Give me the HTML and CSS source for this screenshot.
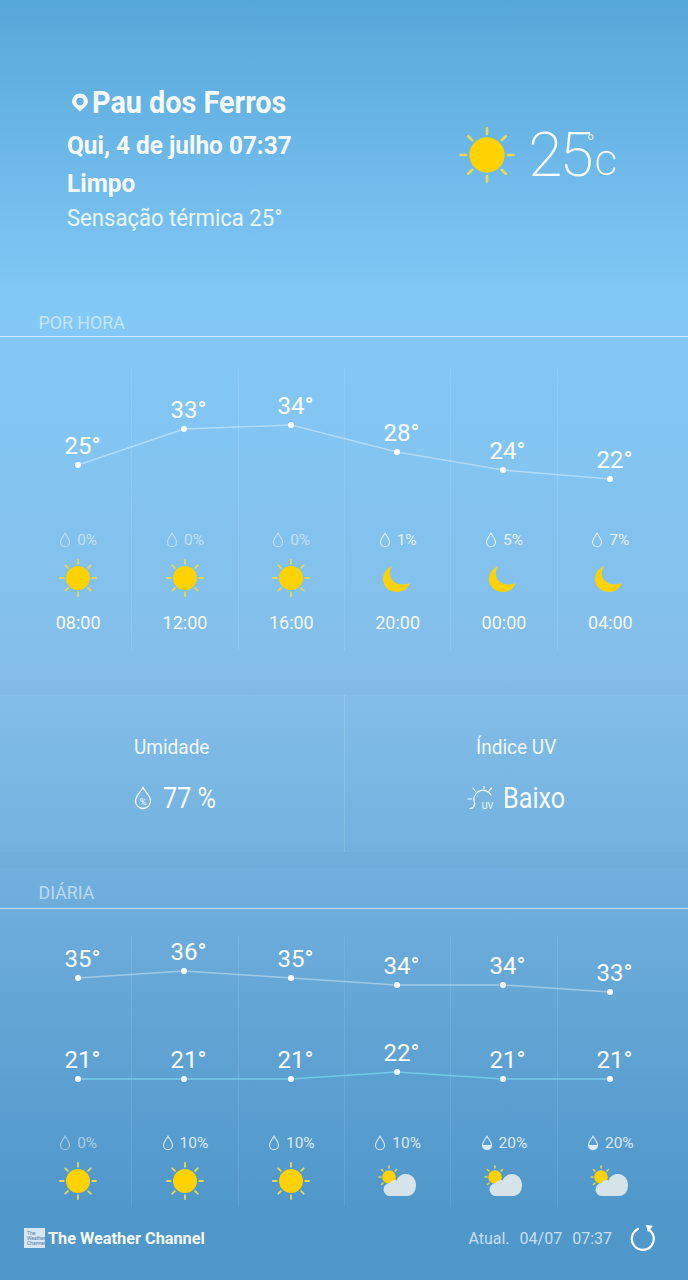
FILE: index.html
```html
<!DOCTYPE html>
<html lang="pt">
<head>
<meta charset="utf-8">
<title>Pau dos Ferros</title>
<link rel="stylesheet" href="styles.css">
</head>
<body>
<svg class="defs" width="0" height="0" aria-hidden="true">
  <symbol id="sun" viewBox="0 0 40 40">
    <g stroke="#e6d95a" stroke-width="1.900" stroke-linecap="round">
      <path d="M20 1v4M20 35v4M1 20h4M35 20h4M6.600 6.600l2.800 2.800M30.600 30.600l2.800 2.800M6.600 33.400l2.800-2.800M30.600 9.400l2.800-2.800"/>
    </g>
    <circle cx="20" cy="20" r="12.600" fill="#ffd200"/>
  </symbol>
  <symbol id="moon" viewBox="-2.500 -5 38 38">
    <path d="M10.500 2C4.500 5 1.500 10 1.500 15C1.500 23 8.500 28 15.500 28C21.500 28 26.500 24 28.500 19C22.500 21.500 14.500 21 10.500 16C7.500 12 7.500 7 10.500 2Z" fill="#ffd200"/>
  </symbol>
  <symbol id="cloudsun" viewBox="0 0 40 32">
    <g stroke="#e3d65a" stroke-width="1.500" stroke-linecap="round">
      <path d="M11 1v2M1 12h2M3.500 4.500l1.500 1.500M3.500 19.500L5 18M18.500 4.500L17 6M11 20v1"/>
    </g>
    <circle cx="11" cy="12" r="6.800" fill="#ffd200"/>
    <path d="M12.500 31A6.500 6.500 0 0 1 11.500 18C13 15.500 16 14.500 18.500 15.500C20 11.500 23.500 9 28 9C34 9 38 14 38 20C38 27 34 31 29 31Z" fill="#d6e3e9"/>
  </symbol>
  <symbol id="drop" viewBox="0 0 12 16">
    <path d="M6 1.200C4.500 4 1.500 7 1.500 10.200A4.500 4.500 0 0 0 10.500 10.200C10.500 7 7.500 4 6 1.200Z" fill="none" stroke="currentColor" stroke-width="1.100"/>
  </symbol>
  <symbol id="dropfill" viewBox="0 0 12 16">
    <path d="M6 1.200C4.500 4 1.500 7 1.500 10.200A4.500 4.500 0 0 0 10.500 10.200C10.500 7 7.500 4 6 1.200Z" fill="none" stroke="currentColor" stroke-width="1.100"/>
    <path d="M1.500 10h9A4.500 4.500 0 0 1 1.500 10Z" fill="currentColor"/>
  </symbol>
</svg>

<main class="screen">
  <header class="now">
    <div class="now-text">
      <h1 class="city">
        <svg class="pin" viewBox="0 0 18 19"><path fill-rule="evenodd" d="M9 0.500a8 8 0 0 0-8 8c0 4 4.500 6.500 8 10c3.500-3.500 8-6 8-10a8 8 0 0 0-8-8Zm0 4.300a3.700 3.700 0 1 1 0 7.400a3.700 3.700 0 0 1 0-7.400Z" fill="#fff"/></svg>
        <span class="city-name">Pau dos Ferros</span>
      </h1>
      <p class="date">Qui, 4 de julho 07:37</p>
      <p class="cond">Limpo</p>
      <p class="feel">Sensação térmica 25°</p>
    </div>
    <div class="now-temp">
      <svg class="sun-big"><use href="#sun"/></svg>
      <span class="big-num">25</span>
      <span class="big-unit"><span class="big-deg">°</span><span class="big-c">c</span></span>
    </div>
  </header>

  <h2 class="label">POR HORA</h2>
  <section class="hourly">
    <div class="cols cols-hour">
      <svg class="chart" viewBox="0 0 638 282">
        <polyline class="line" points="53,97 159,61 266,57 372,84 478,102 585,111"/>
        <g class="dots"><circle cx="53" cy="97" r="3"/><circle cx="159" cy="61" r="3"/><circle cx="266" cy="57" r="3"/><circle cx="372" cy="84" r="3"/><circle cx="478" cy="102" r="3"/><circle cx="585" cy="111" r="3"/></g>
        <g class="temps"><text x="57.500" y="86">25°</text><text x="163.500" y="50">33°</text><text x="270.500" y="46">34°</text><text x="376.500" y="73">28°</text><text x="482.500" y="91">24°</text><text x="589.500" y="100">22°</text></g>
      </svg>
      <div class="col"><div class="pop dim"><svg class="drop"><use href="#drop"/></svg>0%</div><svg class="ico"><use href="#sun"/></svg><div class="time">08:00</div></div>
      <div class="col"><div class="pop dim"><svg class="drop"><use href="#drop"/></svg>0%</div><svg class="ico"><use href="#sun"/></svg><div class="time">12:00</div></div>
      <div class="col"><div class="pop dim"><svg class="drop"><use href="#drop"/></svg>0%</div><svg class="ico"><use href="#sun"/></svg><div class="time">16:00</div></div>
      <div class="col"><div class="pop"><svg class="drop"><use href="#drop"/></svg>1%</div><svg class="ico"><use href="#moon"/></svg><div class="time">20:00</div></div>
      <div class="col"><div class="pop"><svg class="drop"><use href="#drop"/></svg>5%</div><svg class="ico"><use href="#moon"/></svg><div class="time">00:00</div></div>
      <div class="col"><div class="pop"><svg class="drop"><use href="#drop"/></svg>7%</div><svg class="ico"><use href="#moon"/></svg><div class="time">04:00</div></div>
    </div>
  </section>

  <section class="details">
    <div class="detail">
      <div class="detail-title">Umidade</div>
      <div class="detail-value value-hum">
        <svg class="hum" viewBox="0 0 18 24"><path d="M9 1.500C7.500 5 1.500 9.500 1.500 15A7.500 7.500 0 0 0 16.500 15C16.500 9.500 10.500 5 9 1.500Z" fill="none" stroke="#fff" stroke-width="1.300"/><text x="9" y="18.500" class="hum-p">%</text></svg>
        <span class="value-text">77 %</span>
      </div>
    </div>
    <div class="detail">
      <div class="detail-title">Índice UV</div>
      <div class="detail-value value-uv">
        <svg class="uv" viewBox="0 0 28 24"><path d="M8 18A9 9 0 1 1 24 9M17 0.500v2.500M6 2l2.500 3.500M24.500 2L22 5M1 13h3.500M3 22.500C6 22.500 7.500 20 7.500 17" fill="none" stroke="#fff" stroke-width="1.200" stroke-linecap="round"/><text x="20.500" y="23" class="uv-t">UV</text></svg>
        <span class="value-text">Baixo</span>
      </div>
    </div>
  </section>

  <h2 class="label label-daily">DIÁRIA</h2>
  <section class="daily">
    <div class="cols cols-day">
      <svg class="chart" viewBox="0 0 638 271">
        <polyline class="line" points="53,42 159,35 266,42 372,49 478,49 585,56"/>
        <polyline class="line-low" points="53,143 159,143 266,143 372,136 478,143 585,143"/>
        <g class="dots"><circle cx="53" cy="42" r="3"/><circle cx="159" cy="35" r="3"/><circle cx="266" cy="42" r="3"/><circle cx="372" cy="49" r="3"/><circle cx="478" cy="49" r="3"/><circle cx="585" cy="56" r="3"/><circle cx="53" cy="143" r="3"/><circle cx="159" cy="143" r="3"/><circle cx="266" cy="143" r="3"/><circle cx="372" cy="136" r="3"/><circle cx="478" cy="143" r="3"/><circle cx="585" cy="143" r="3"/></g>
        <g class="temps"><text x="57.500" y="31">35°</text><text x="163.500" y="24">36°</text><text x="270.500" y="31">35°</text><text x="376.500" y="38">34°</text><text x="482.500" y="38">34°</text><text x="589.500" y="45">33°</text><text x="57.500" y="132">21°</text><text x="163.500" y="132">21°</text><text x="270.500" y="132">21°</text><text x="376.500" y="125">22°</text><text x="482.500" y="132">21°</text><text x="589.500" y="132">21°</text></g>
      </svg>
      <div class="col"><div class="pop dim"><svg class="drop"><use href="#drop"/></svg>0%</div><svg class="ico"><use href="#sun"/></svg></div>
      <div class="col"><div class="pop"><svg class="drop"><use href="#drop"/></svg>10%</div><svg class="ico"><use href="#sun"/></svg></div>
      <div class="col"><div class="pop"><svg class="drop"><use href="#drop"/></svg>10%</div><svg class="ico"><use href="#sun"/></svg></div>
      <div class="col"><div class="pop"><svg class="drop"><use href="#drop"/></svg>10%</div><svg class="ico-cloud"><use href="#cloudsun"/></svg></div>
      <div class="col"><div class="pop"><svg class="drop"><use href="#dropfill"/></svg>20%</div><svg class="ico-cloud"><use href="#cloudsun"/></svg></div>
      <div class="col"><div class="pop"><svg class="drop"><use href="#dropfill"/></svg>20%</div><svg class="ico-cloud"><use href="#cloudsun"/></svg></div>
    </div>
  </section>

  <footer class="foot">
    <div class="brand">
      <div class="logo"><span>The</span><span>Weather</span><span>Channel</span></div>
      <span class="brand-name">The Weather Channel</span>
    </div>
    <div class="updated">
      <span class="upd-label">Atual.</span>
      <span>04/07</span>
      <span>07:37</span>
      <svg class="refresh" viewBox="0 -2 26 28"><path d="M8 3A11 11 0 1 0 18 3.200" fill="none" stroke="#fff" stroke-width="2.200" stroke-linecap="round"/><path d="M16 -1L23 -0.300L18 6.300Z" fill="#fff"/></svg>
    </div>
  </footer>
</main>
</body>
</html>
```

FILE: styles.css
```css
* { box-sizing: border-box; margin: 0; padding: 0; }
html, body { width: 688px; height: 1280px; overflow: hidden; }
body { font-family: Roboto, "Liberation Sans", sans-serif; color: #fff; }
.defs { position: absolute; }

.screen {
  width: 688px;
  height: 1280px;
  display: flex;
  flex-direction: column;
  background: linear-gradient(180deg, #56a7da 0, #83c9f7 310px, #84bee9 680px, #5097ca 1207px, #5097ca 1280px);
}
.screen > * { flex: none; }

/* Current conditions */
.now {
  height: 314px;
  padding: 84px 71px 0 67px;
  display: flex;
  justify-content: space-between;
  align-items: flex-start;
}
.city {
  display: flex;
  align-items: center;
  gap: 3px;
  height: 36px;
  padding-left: 4px;
  font-size: 32px;
  font-weight: 700;
  opacity: .95;
}
.city-name { display: inline-block; transform: scaleX(.9); transform-origin: left center; }
.pin { width: 18px; height: 19px; }
.date, .cond, .feel { transform-origin: left center; white-space: nowrap; }
.date { margin-top: 6px; font-size: 26.5px; font-weight: 700; line-height: 38px; opacity: .95; transform: scaleX(.92); }
.cond { font-size: 26.5px; font-weight: 700; line-height: 38px; opacity: .95; transform: scaleX(.92); }
.feel { font-size: 23.5px; font-weight: 400; line-height: 32px; opacity: .85; transform: scaleX(.94); }

.now-temp {
  display: flex;
  align-items: flex-start;
  margin-top: 42px;
}
.sun-big { width: 56px; height: 56px; margin: 1px 13px 0 0; }
.big-num { font-size: 62px; font-weight: 200; line-height: 58px; letter-spacing: -3px; }
.big-unit { display: flex; align-items: flex-start; margin-left: -4px; }
.big-deg { width: 8px; font-size: 22px; font-weight: 200; line-height: 14px; margin-top: 11px; }
.big-c { font-size: 44px; font-weight: 200; line-height: 40px; margin-top: 14px; }

/* Section labels */
.label {
  height: 23px;
  padding: 0 0 0 38.5px;
  font-size: 17.8px;
  font-weight: 400;
  line-height: 17px;
  color: rgba(255, 255, 255, .55);
  border-bottom: 1px solid rgba(255, 255, 255, .6);
}
.label-daily { margin-top: 16px; height: 25px; }

/* Columns with chart */
.hourly { height: 343px; padding: 31px 25px 0; }
.daily { padding: 27px 25px 0; }
.cols { position: relative; display: grid; grid-template-columns: repeat(6, 1fr); }
.cols-hour { height: 282px; }
.cols-day { height: 271px; }
.chart { position: absolute; left: 0; top: 0; width: 100%; height: 100%; overflow: visible; }
.col {
  display: flex;
  flex-direction: column;
  align-items: center;
  border-left: 1px solid rgba(255, 255, 255, .1);
}
.col:first-of-type { border-left: 0; }
.cols-hour .col { padding-top: 162px; }
.cols-day .col { padding-top: 197px; }

.line { fill: none; stroke: rgba(255, 255, 255, .38); stroke-width: 1.5; }
.line-low { fill: none; stroke: #74cbe9; stroke-width: 1.5; }
.dots { fill: #fff; }
.temps { fill: #fff; font-family: Roboto, sans-serif; font-size: 24px; text-anchor: middle; }

.pop {
  display: flex;
  align-items: center;
  gap: 6px;
  height: 20px;
  font-size: 15.5px;
  color: rgba(255, 255, 255, .8);
}
.pop.dim { color: rgba(255, 255, 255, .5); }
.drop { width: 12px; height: 16px; }
.ico { width: 38px; height: 38px; margin-top: 9px; }
.ico-cloud { width: 40px; height: 32px; margin-top: 12px; }
.time { margin-top: 14px; font-size: 18px; line-height: 24px; color: rgba(255, 255, 255, .95); }

/* Details: two darker bands around a panel */
.details {
  height: 188px;
  display: grid;
  grid-template-columns: 1fr 1fr;
  border-top: 15px solid rgba(60, 110, 160, .05);
  border-bottom: 16px solid rgba(60, 110, 160, .05);
}
.detail { display: flex; flex-direction: column; align-items: center; padding-top: 38px; }
.detail + .detail { border-left: 1px solid rgba(255, 255, 255, .15); }
.detail-title { font-size: 20px; line-height: 28px; opacity: .9; transform: scaleX(.95); }
.detail-value { display: flex; align-items: center; margin-top: 19px; font-size: 29px; line-height: 36px; opacity: .95; }
.value-text { display: inline-block; transform: scaleX(.87); transform-origin: left center; }
.value-hum { gap: 11px; padding-left: 14px; }
.value-uv { gap: 8px; padding-left: 9px; }
.hum { width: 18px; height: 24px; }
.hum-p { fill: #fff; font-family: Roboto, sans-serif; font-size: 9px; text-anchor: middle; }
.uv { width: 28px; height: 24px; }
.uv-t { fill: #fff; font-family: Roboto, sans-serif; font-size: 9px; text-anchor: middle; }

/* Footer */
.foot {
  height: 73px;
  padding: 0 32.5px 11px 24px;
  display: flex;
  justify-content: space-between;
  align-items: center;
}
.brand { display: flex; align-items: center; gap: 3px; }
.logo {
  width: 21px;
  height: 20px;
  padding: 3px 0 1px 3px;
  background: #d7e6f1;
  display: flex;
  flex-direction: column;
  overflow: hidden;
}
.logo span { font-size: 5px; line-height: 5px; color: #4f7ea8; white-space: nowrap; }
.brand-name { font-size: 16.3px; font-weight: 700; opacity: .95; }
.updated { display: flex; align-items: center; gap: 10px; font-size: 16px; color: rgba(255, 255, 255, .7); }
.refresh { width: 26px; height: 28px; margin-left: 7.5px; }
```
